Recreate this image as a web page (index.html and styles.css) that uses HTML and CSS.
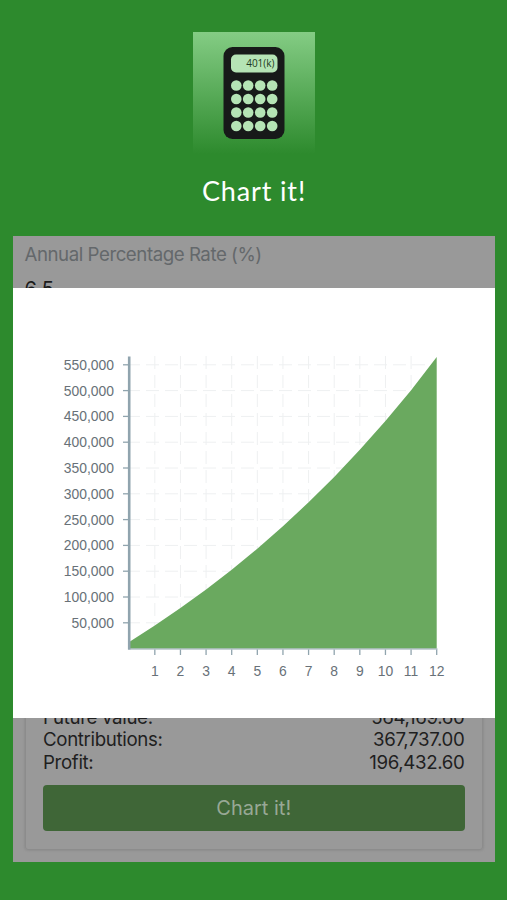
FILE: index.html
```html
<!DOCTYPE html>
<html lang="en">
<head>
<meta charset="utf-8">
<title>Chart it!</title>
<link rel="stylesheet" href="styles.css">
</head>
<body>
<header class="hero">
  <svg class="logo" width="122" height="122" viewBox="0 0 122 122">
    <defs>
      <linearGradient id="fade" x1="0" y1="0" x2="0" y2="1">
        <stop offset="0" stop-color="#84cc84"/>
        <stop offset="1" stop-color="#2d8a2d"/>
      </linearGradient>
    </defs>
    <rect width="122" height="122" fill="url(#fade)"/>
    <rect x="30.5" y="15" width="61" height="92" rx="9" fill="#171a19"/>
    <rect x="38" y="22.5" width="46.500" height="18" rx="5" fill="#b5e4b5"/>
    <text class="logo-text" x="81.500" y="35">401(k)</text>
    <g fill="#b5e4b5">
      <circle cx="43.300" cy="53.500" r="5.300"/><circle cx="55.200" cy="53.500" r="5.300"/><circle cx="67.200" cy="53.500" r="5.300"/><circle cx="79.200" cy="53.500" r="5.300"/>
      <circle cx="43.300" cy="67" r="5.300"/><circle cx="55.200" cy="67" r="5.300"/><circle cx="67.200" cy="67" r="5.300"/><circle cx="79.200" cy="67" r="5.300"/>
      <circle cx="43.300" cy="80.500" r="5.300"/><circle cx="55.200" cy="80.500" r="5.300"/><circle cx="67.200" cy="80.500" r="5.300"/><circle cx="79.200" cy="80.500" r="5.300"/>
      <circle cx="43.300" cy="94" r="5.300"/><circle cx="55.200" cy="94" r="5.300"/><circle cx="67.200" cy="94" r="5.300"/><circle cx="79.200" cy="94" r="5.300"/>
    </g>
  </svg>
  <h1 class="title">Chart it!</h1>
</header>
<main class="screen">
  <div class="field">
    <div class="label">Annual Percentage Rate (%)</div>
    <div class="value">6.5</div>
  </div>
  <section class="card">
    <div class="row"><span>Future value:</span><span>564,169.60</span></div>
    <div class="row"><span>Contributions:</span><span>367,737.00</span></div>
    <div class="row"><span>Profit:</span><span>196,432.60</span></div>
    <button class="button">Chart it!</button>
  </section>
  <div class="modal">
    <svg class="chart" id="chart" width="482" height="430" viewBox="13 288 482 430">
      <g id="grid" class="grid"></g>
      <path class="area" d="M129.200 648.600V641.900L154.800 625.500L180.400 608.100L206.100 589.500L231.700 569.700L257.300 548.700L282.900 526.200L308.600 502.300L334.200 476.900L359.800 449.800L385.400 420.900L411.100 390.200L436.700 357V648.600Z"/>
      <path class="x-axis" d="M128 649H437.500"/>
      <path class="y-axis" d="M129.200 356.500V649.500"/>
      <g id="ticks" class="ticks"></g>
      <g id="ylabels" class="labels y-labels"></g>
      <g id="xlabels" class="labels x-labels"></g>
    </svg>
  </div>
</main>
<script src="chart.js"></script>
</body>
</html>
```
FILE: styles.css
```css
* { box-sizing: border-box; }
body {
  margin: 0;
  height: 900px;
  overflow: hidden;
  background: #2d8a2d;
  font-family: Inter, "Liberation Sans", sans-serif;
}
.hero {
  height: 236px;
  padding: 32px 0 0 1px;
  display: flex;
  flex-direction: column;
  align-items: center;
}
.logo { display: block; flex: none; }
.logo-text {
  font: 10px "Open Sans", sans-serif;
  text-anchor: end;
  fill: #1d3a22;
}
.title {
  margin: 18px 0 0;
  font: 400 27px/38px Lato, sans-serif;
  letter-spacing: 0.850px;
  color: #fff;
}
.screen {
  position: relative;
  width: 482.500px;
  height: 626px;
  margin-left: 12.500px;
  padding: 7px 12px 12px;
  background: #999;
  overflow: hidden;
  display: flex;
  flex-direction: column;
  justify-content: space-between;
}
.field { font-size: 18.700px; line-height: 24px; }
.label { color: #64686b; letter-spacing: -0.460px; }
.value { margin-top: 10px; color: #1c1c1c; font-size: 20px; }
.card {
  border: 1px solid #8c8c8c;
  box-shadow: 0 0 3px #808080;
  border-radius: 3px;
  height: 190px;
  padding: 0 17.500px 18px;
  display: flex;
  flex-direction: column;
  justify-content: flex-end;
}
.row {
  display: flex;
  justify-content: space-between;
  font-size: 18.700px;
  line-height: 22.300px;
  letter-spacing: -0.350px;
  color: #1f1f1f;
}
.button {
  height: 46px;
  margin: 11px 0 0;
  border: 0;
  border-radius: 4px;
  background: #3f6637;
  color: #98a895;
  font: 20px Inter, sans-serif;
  flex: none;
}
.modal {
  position: absolute;
  left: 0;
  right: 0;
  top: 52px;
  height: 430px;
  background: #fff;
}
.chart { display: block; margin-left: 0.500px; }
.grid { stroke: #eef0f1; stroke-width: 1; stroke-dasharray: 13 6; }
.area { fill: #6aa95f; }
.x-axis { stroke: #90a4ae; stroke-width: 1.200; fill: none; }
.y-axis { stroke: #90a4ae; stroke-width: 2.600; fill: none; }
.ticks { stroke: #90a4ae; stroke-width: 1.300; }
.labels { font: 13.900px "Liberation Sans", sans-serif; fill: #687178; }
.y-labels { text-anchor: end; }
.x-labels { text-anchor: middle; }
```
FILE: chart.js
```js
const NS = "http://www.w3.org/2000/svg";
const add = (parent, name, attrs, text) => {
  const el = document.createElementNS(NS, name);
  for (const key in attrs) el.setAttribute(key, attrs[key]);
  if (text) el.textContent = text;
  document.getElementById(parent).appendChild(el);
};
const line = (parent, x1, y1, x2, y2) => add(parent, "line", { x1, y1, x2, y2 });

for (let year = 1; year <= 12; year++) {
  const x = 129.2 + year * 25.625;
  if (year < 12) line("grid", x, 356, x, 648);
  line("ticks", x, 649.5, x, 655);
  add("xlabels", "text", { x, y: 676 }, String(year));
}
for (let step = 1; step <= 11; step++) {
  const y = 648.6 - step * 25.8;
  line("grid", 127, y, 436, y);
  line("ticks", 123, y, 128, y);
  add("ylabels", "text", { x: 114, y: y + 5 }, (step * 50) + ",000");
}
```
